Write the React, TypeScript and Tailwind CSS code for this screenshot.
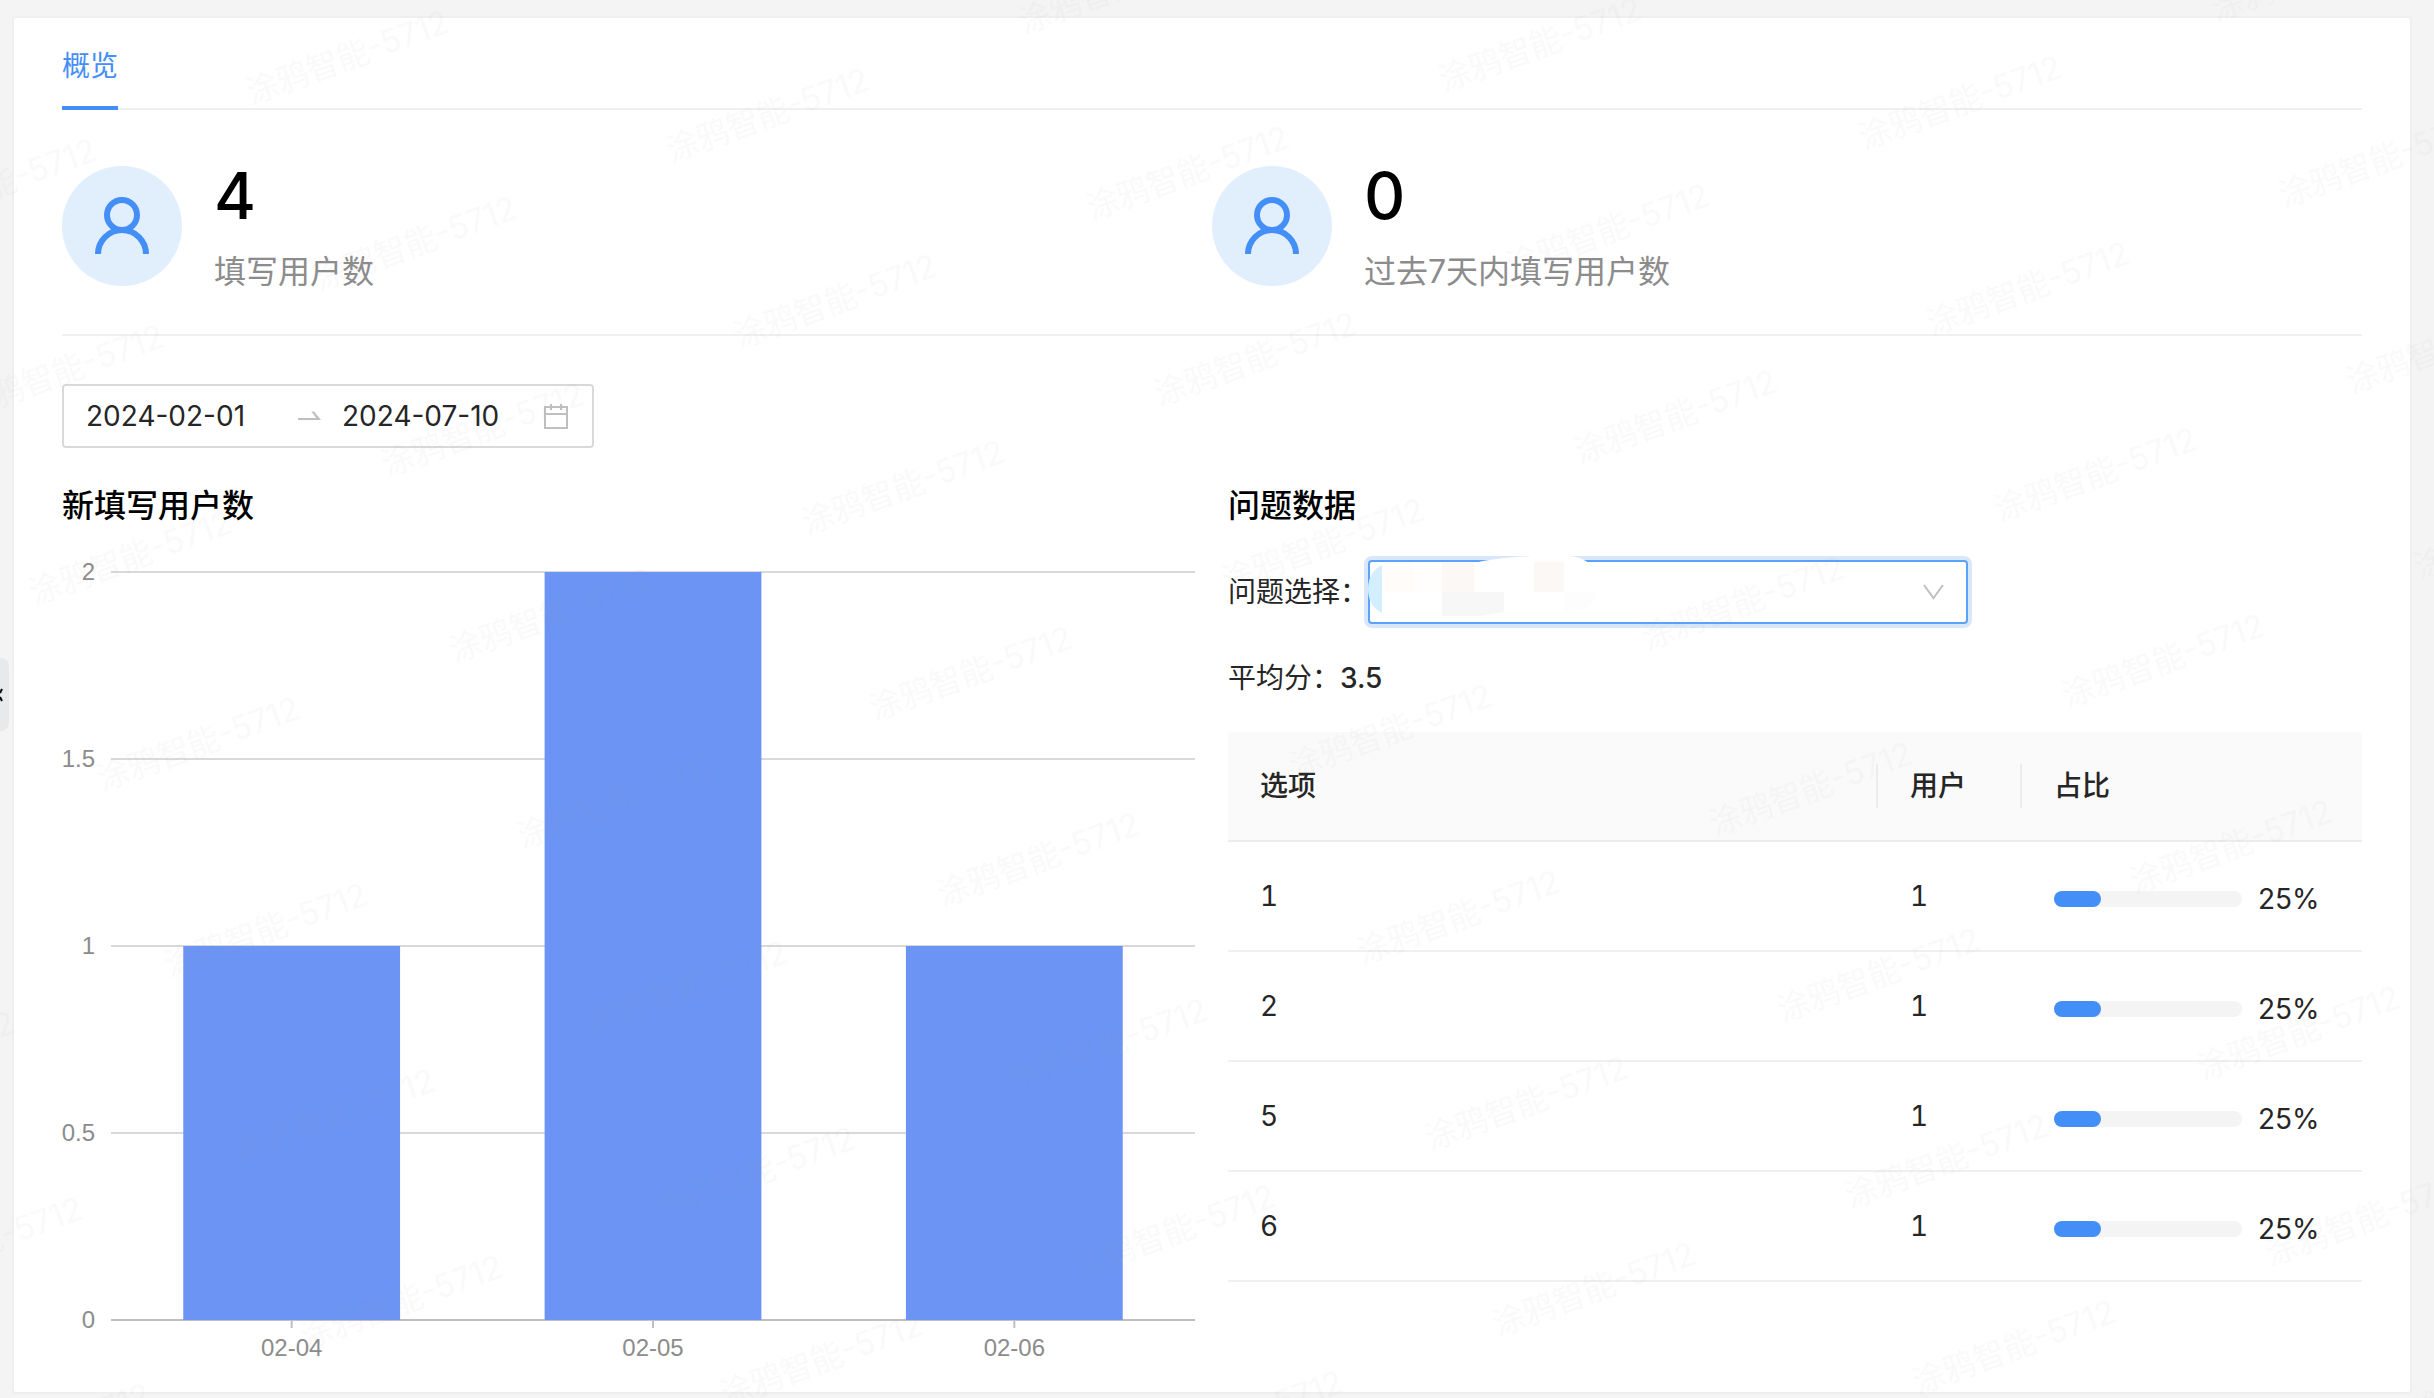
import clsx from "clsx";

const stats = [
    { label: "填写用户数", value: 4 },
    { label: "过去7天内填写用户数", value: 0 },
];

const chartData = [
    { date: "02-04", value: 1 },
    { date: "02-05", value: 2 },
    { date: "02-06", value: 1 },
];

const answers = [
    { option: "1", users: 1, percent: 25 },
    { option: "2", users: 1, percent: 25 },
    { option: "5", users: 1, percent: 25 },
    { option: "6", users: 1, percent: 25 },
];

const UserIcon = () => (
    <svg viewBox="0 0 60 60" className="size-15" fill="none" stroke="#448ef7" strokeWidth="6" aria-hidden="true">
        <circle cx="30" cy="19" r="15" />
        <path d="M6 58a24 24 0 0 1 48 0" />
    </svg>
);

const ArrowIcon = () => (
    <svg viewBox="0 0 28 28" className="size-7 shrink-0" fill="#bfbfbf" aria-hidden="true">
        <path d="M2 16h18.300l-5-6.500h2.700l7 8.500H2z" />
    </svg>
);

const CalendarIcon = () => (
    <svg viewBox="0 0 28 28" className="size-7 shrink-0" fill="none" stroke="#bfbfbf" strokeWidth="2" aria-hidden="true">
        <path d="M3 5h22v21H3zM3 12h22M9 2v6M19 2v6" />
    </svg>
);

const Stat = ({ label, value }: { label: string; value: number }) => (
    <div className="flex items-start gap-8">
        <div className="flex size-[120px] shrink-0 items-center justify-center rounded-full bg-[#e1effd]">
            <UserIcon />
        </div>
        <div>
            <p className="text-[64px] leading-[60px] font-medium text-black">{value}</p>
            <p className="mt-[26px] text-[32px] leading-10 text-[#8c8c8c]">{label}</p>
        </div>
    </div>
);

const DateRange = () => (
    <div className="mt-12 flex h-16 w-[532px] items-center rounded-sm border-2 border-[#d9d9d9] px-[22px] text-[28px]">
        <input aria-label="开始日期" defaultValue="2024-02-01" className="w-0 flex-1 bg-transparent outline-none" />
        <span className="px-[18px]">
            <ArrowIcon />
        </span>
        <input aria-label="结束日期" defaultValue="2024-07-10" className="w-0 flex-1 bg-transparent outline-none" />
        <span className="ml-2">
            <CalendarIcon />
        </span>
    </div>
);

const BarChart = () => {
    const left = 49;
    const right = 1133;
    const bottom = 776;
    const unit = 374;
    const band = (right - left) / chartData.length;
    const barWidth = band * 0.6;

    return (
        <svg
            viewBox="0 0 1134 824"
            className="mt-3 block w-full font-['Liberation_Sans',sans-serif] text-[24px]"
            role="img"
            aria-label="新填写用户数"
        >
            {[0, 0.5, 1, 1.5, 2].map((tick) => (
                <g key={tick}>
                    <line
                        x1={left}
                        x2={right}
                        y1={bottom - tick * unit}
                        y2={bottom - tick * unit}
                        stroke={tick === 0 ? "#bfbfbf" : "#d9d9d9"}
                        strokeWidth="2"
                    />
                    <text x="33" y={bottom - tick * unit + 8} textAnchor="end" fill="#8c8c8c">
                        {tick}
                    </text>
                </g>
            ))}
            {chartData.map((item, i) => {
                const center = left + band * (i + 0.5);
                return (
                    <g key={item.date}>
                        <rect
                            x={center - barWidth / 2}
                            y={bottom - item.value * unit}
                            width={barWidth}
                            height={item.value * unit}
                            fill="#6b94f4"
                        />
                        <line x1={center} x2={center} y1={bottom + 1} y2={bottom + 8} stroke="#bfbfbf" strokeWidth="2" />
                        <text x={center} y="812" textAnchor="middle" fill="#8c8c8c">
                            {item.date}
                        </text>
                    </g>
                );
            })}
        </svg>
    );
};

const QuestionSelect = () => (
    <div className="mt-7 flex items-center">
        <label htmlFor="question">问题选择：</label>
        <div className="relative w-[600px]">
            <select
                id="question"
                className="block h-16 w-full appearance-none rounded-sm border-2 border-[#5aa2fb] bg-white px-[22px] ring-4 ring-[#d9e7fc] outline-none"
            >
                <option value="" />
            </select>
            {/* blurred-out question title */}
            <svg
                viewBox="0 0 240 68"
                className="pointer-events-none absolute -top-1 left-0 z-10 h-[68px] w-60"
                aria-hidden="true"
            >
                <path d="M14 7H105Q135 1 165 0H201Q213 1 221 7Q234 16 234 36V58H14z" fill="#fff" />
                <path d="M14 9V57C5 53 0 44 0 33S5 13 14 9z" fill="#d3eeff" />
                <path d="M14 6h29v30H14z" fill="#fffcf9" />
                <path d="M43 6h31v30H43z" fill="#fffefc" />
                <path d="M74 6h32v30H74zM166 6h30v30h-30z" fill="#fcf8f6" />
                <path d="M74 36h62v20l-24 4H74z" fill="#f7f7f7" />
                <path d="M196 36h32c0 12-10 19-20 19h-12z" fill="#fdfdfd" />
            </svg>
            <svg
                viewBox="0 0 24 24"
                className="pointer-events-none absolute top-5 right-[22px] size-6"
                fill="none"
                stroke="#bfbfbf"
                strokeWidth="2"
                aria-hidden="true"
            >
                <path d="M2 5l9.500 13L21 5" />
            </svg>
        </div>
    </div>
);

const headers = [
    { title: "选项", width: "" },
    { title: "用户", width: "w-36" },
    { title: "占比", width: "w-[340px]" },
];

const cell = "h-[110px] border-b-2 border-[#f0f0f0] px-8 py-0";

const AnswerTable = () => (
    <table className="mt-8 w-full table-fixed border-separate border-spacing-0 text-left">
        <thead>
            <tr>
                {headers.map(({ title, width }, i) => (
                    <th
                        key={title}
                        className={clsx(
                            "h-[110px] border-b-2 border-[#ececec] bg-[#fafafa] p-0 font-medium first:rounded-tl-sm last:rounded-tr-sm",
                            width,
                        )}
                    >
                        <div className={clsx("flex h-11 items-center pl-8", i < 2 && "border-r-2 border-[#ececec]")}>
                            {title}
                        </div>
                    </th>
                ))}
            </tr>
        </thead>
        <tbody>
            {answers.map((row) => (
                <tr key={row.option}>
                    <td className={clsx(cell, "tabular-nums")}>{row.option}</td>
                    <td className={clsx(cell, "tabular-nums")}>{row.users}</td>
                    <td className={cell}>
                        <div className="flex items-center gap-4 pt-1.5">
                            <div className="h-4 w-[188px] rounded-full bg-[#f4f4f4]">
                                <div className="h-4 rounded-full bg-[#448ef7]" style={{ width: `${row.percent}%` }} />
                            </div>
                            <span>{row.percent}%</span>
                        </div>
                    </td>
                </tr>
            ))}
        </tbody>
    </table>
);

const Watermark = () => (
    <svg className="pointer-events-none absolute inset-0 size-full" aria-hidden="true">
        <defs>
            <pattern
                id="watermark"
                width="375"
                height="198"
                patternUnits="userSpaceOnUse"
                patternTransform="translate(227 49) rotate(-20)"
            >
                <text x="4" y="60" fontSize="32" fill="#888" fillOpacity="0.05">
                    涂鸦智能-5712
                </text>
            </pattern>
        </defs>
        <rect width="100%" height="100%" fill="url(#watermark)" />
    </svg>
);

export default function App() {
    return (
        <div
            lang="zh-CN"
            className="relative min-h-screen overflow-hidden bg-[#f4f4f4] pt-4 pr-[22px] pb-1 pl-3 font-['Inter','Noto_Sans_CJK_SC',sans-serif] text-[28px] leading-11 text-[#262626]"
        >
            <button
                aria-label="收起"
                className="absolute top-[658px] left-0 flex h-[73px] w-[9px] items-center rounded-r-lg bg-[#e8e9eb]"
            >
                <svg viewBox="0 0 4 14" className="h-3.5 w-1" fill="none" stroke="#000" strokeWidth="2" aria-hidden="true">
                    <path d="M2 1L0 5M0 9l2 4" />
                </svg>
            </button>
            <main className="rounded-sm border-2 border-[#efefef] bg-white px-12 pt-[26px] pb-6">
                <nav className="flex border-b-2 border-[#f0f0f0]">
                    <button className="-mb-0.5 border-b-4 border-[#448ef7] pb-[18px] text-[#448ef7]">概览</button>
                </nav>
                <section className="grid grid-cols-2 border-b-2 border-[#f0f0f0] pt-14 pb-[42px]">
                    {stats.map((stat) => (
                        <Stat key={stat.label} {...stat} />
                    ))}
                </section>
                <DateRange />
                <div className="mt-8 grid grid-cols-2 gap-8">
                    <section>
                        <h2 className="text-[32px] leading-[52px] font-medium text-black">新填写用户数</h2>
                        <BarChart />
                    </section>
                    <section>
                        <h2 className="text-[32px] leading-[52px] font-medium text-black">问题数据</h2>
                        <QuestionSelect />
                        <p className="mt-8">
                            平均分：<span className="font-medium">3.5</span>
                        </p>
                        <AnswerTable />
                    </section>
                </div>
            </main>
            <Watermark />
        </div>
    );
}
